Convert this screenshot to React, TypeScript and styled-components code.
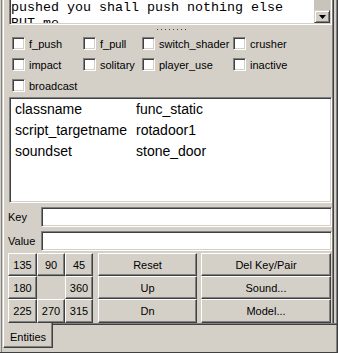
import React from "react";
import styled, { createGlobalStyle } from "styled-components";

const Global = createGlobalStyle`
  html, body { margin: 0; padding: 0; background: #d4d0c8; }
  body { font-family: "Liberation Sans", Arial, sans-serif; font-size: 11px; color: #000; }
  * { box-sizing: border-box; }
`;

const Window = styled.div`
  width: 338px;
  height: 353px;
  display: flex;
  flex-direction: column;
  padding-left: 3px;
  background: #d4d0c8;
  border-right: 1px solid #404040;
  border-bottom: 1px solid #404040;
  box-shadow: inset 1px 0 #d4d0c8, inset 2px 0 #808080, inset -1px 0 #808080;
  overflow: hidden;
`;

const Panel = styled.div`
  width: 331px;
  height: 323px;
  flex: none;
  display: flex;
  flex-direction: column;
  padding: 0 1px 0 4px;
  border-left: 1px solid #fff;
  border-right: 1px solid #404040;
  box-shadow: inset -1px 0 #808080;
`;

const TextWrap = styled.div`
  margin-left: 1px;
  width: 323px;
  height: 25px;
  flex: none;
  display: flex;
  padding: 0 1px 1px 1px;
  background: #fff;
  border-left: 1px solid #808080;
  border-right: 1px solid #fff;
  border-bottom: 1px solid #fff;
  box-shadow: inset 1px 0 #404040, inset -1px 0 #d4d0c8, inset 0 -1px #d4d0c8;
`;

const MonoText = styled.div`
  flex: 1;
  overflow: hidden;
  white-space: pre;
  font-family: "Liberation Mono", "Courier New", monospace;
  font-size: 13.33px;
  line-height: 16px;
`;

const ScrollBar = styled.div`
  width: 16px;
  flex: none;
  display: flex;
  flex-direction: column;
`;

const ScrollTrack = styled.div`
  flex: 1;
  background: #c8c4bc;
`;

const ScrollButton = styled.div`
  height: 13px;
  flex: none;
  display: flex;
  align-items: center;
  justify-content: center;
  background: #d4d0c8;
  border: 1px solid;
  border-color: #d4d0c8 #404040 #404040 #d4d0c8;
  box-shadow: inset 1px 1px #fff, inset -1px -1px #808080;
`;

const Grip = styled.div`
  height: 8px;
  flex: none;
  display: flex;
  align-items: center;
  padding-left: 149px;
`;

const GripDots = styled.div`
  width: 31px;
  height: 1px;
  background: repeating-linear-gradient(90deg, #404040 0 1px, transparent 1px 4px);
`;

const Checks = styled.div`
  display: grid;
  grid-template-columns: 71px 59px 91px 1fr;
  grid-auto-rows: 21px;
  padding-left: 4px;
`;

const Check = styled.label`
  display: flex;
  align-items: center;
  gap: 4px;
  white-space: nowrap;
`;

const Box = styled.span`
  width: 13px;
  height: 13px;
  flex: none;
  background: #fff;
  border: 1px solid;
  border-color: #808080 #fff #fff #808080;
  box-shadow: inset 1px 1px #404040, inset -1px -1px #d4d0c8;
`;

const List = styled.div`
  margin: 1px 0 0 1px;
  width: 323px;
  height: 106px;
  flex: none;
  padding: 1px 0 0 5px;
  background: #fff;
  border: 1px solid;
  border-color: #808080 #fff #fff #808080;
  box-shadow: inset 1px 1px #404040, inset -1px -1px #d4d0c8;
  font-size: 14px;
  line-height: 21px;
`;

const ListRow = styled.div`
  display: grid;
  grid-template-columns: 121px 1fr;
  white-space: nowrap;
`;

const FieldRow = styled.div<{ $top: number }>`
  margin-top: ${(p) => p.$top}px;
  height: 20px;
  flex: none;
  display: flex;
  align-items: center;
`;

const FieldLabel = styled.span`
  width: 33px;
  flex: none;
`;

const Input = styled.div`
  flex: 1;
  height: 20px;
  background: #fff;
  border: 1px solid;
  border-color: #808080 #fff #fff #808080;
  box-shadow: inset 1px 1px #404040, inset -1px -1px #d4d0c8;
`;

const ButtonArea = styled.div`
  margin-top: 2px;
  display: flex;
  gap: 5px;
`;

const AngleGrid = styled.div`
  display: grid;
  grid-template-columns: 29px 28px 28px;
  grid-template-rows: 23px 23px 24px;
`;

const ActionGrid = styled.div`
  display: grid;
  grid-template-columns: 99px 130px;
  grid-template-rows: 23px 23px 24px;
  column-gap: 4px;
`;

const Button = styled.div`
  display: flex;
  align-items: center;
  justify-content: center;
  background: #d4d0c8;
  border: 1px solid;
  border-color: #fff #404040 #404040 #fff;
  box-shadow: inset -1px -1px #808080;
  white-space: nowrap;
`;

const TabRow = styled.div`
  display: flex;
  height: 25px;
  flex: none;
`;

const Tab = styled.div`
  width: 50px;
  flex: none;
  padding: 3px 0 0 6px;
  display: flex;
  align-items: center;
  border-left: 1px solid #fff;
  border-right: 1px solid #404040;
  border-bottom: 1px solid #404040;
  box-shadow: inset -1px -1px #808080;
`;

const TabFiller = styled.div`
  flex: 1;
  height: 2px;
  border-top: 1px solid #808080;
  border-bottom: 1px solid #404040;
  border-right: 1px solid #404040;
`;

const flags = [
  "f_push", "f_pull", "switch_shader", "crusher",
  "impact", "solitary", "player_use", "inactive",
  "broadcast",
];

const props = [
  ["classname", "func_static"],
  ["script_targetname", "rotadoor1"],
  ["soundset", "stone_door"],
];

const angles = ["135", "90", "45", "180", "", "360", "225", "270", "315"];
const actions = ["Reset", "Del Key/Pair", "Up", "Sound...", "Dn", "Model..."];

export default function App() {
  return (
    <>
      <Global />
      <Window>
        <Panel>
          <TextWrap>
            <MonoText>{"pushed you shall push nothing else\nBUT me"}</MonoText>
            <ScrollBar>
              <ScrollTrack />
              <ScrollButton>
                <svg width="7" height="4" viewBox="0 0 7 4">
                  <path d="M0 0h7L3.5 4z" fill="#000" />
                </svg>
              </ScrollButton>
            </ScrollBar>
          </TextWrap>
          <Grip>
            <GripDots />
          </Grip>
          <Checks>
            {flags.map((f) => (
              <Check key={f}>
                <Box />
                {f}
              </Check>
            ))}
          </Checks>
          <List>
            {props.map(([k, v]) => (
              <ListRow key={k}>
                <span>{k}</span>
                <span>{v}</span>
              </ListRow>
            ))}
          </List>
          <FieldRow $top={4}>
            <FieldLabel>Key</FieldLabel>
            <Input />
          </FieldRow>
          <FieldRow $top={4}>
            <FieldLabel>Value</FieldLabel>
            <Input />
          </FieldRow>
          <ButtonArea>
            <AngleGrid>
              {angles.map((a, i) => (a ? <Button key={i}>{a}</Button> : <div key={i} />))}
            </AngleGrid>
            <ActionGrid>
              {actions.map((a) => (
                <Button key={a}>{a}</Button>
              ))}
            </ActionGrid>
          </ButtonArea>
        </Panel>
        <TabRow>
          <Tab>Entities</Tab>
          <TabFiller />
        </TabRow>
      </Window>
    </>
  );
}
